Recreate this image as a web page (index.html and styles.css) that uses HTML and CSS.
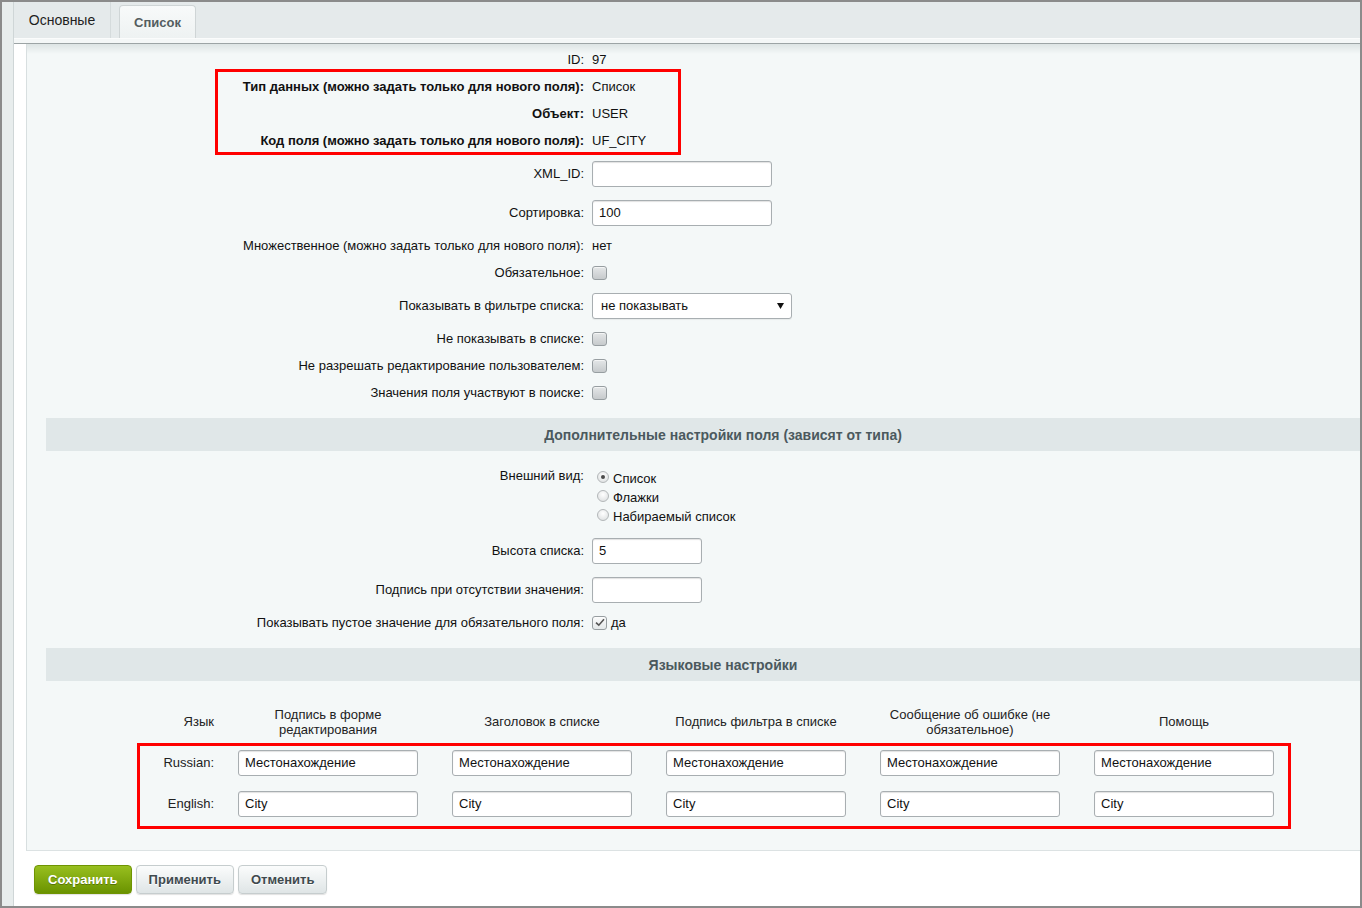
FILE: index.html
```html
<!DOCTYPE html>
<html lang="ru">
<head>
<meta charset="utf-8">
<title>Пользовательское поле</title>
<link rel="stylesheet" href="styles.css">
</head>
<body>
<div class="frame">
  <div class="page">
    <div class="tabs">
      <div class="tab tab-main">Основные</div>
      <div class="tab tab-list">Список</div>
    </div>
    <div class="tabs-under"></div>

    <div class="panel">
      <div class="form">
        <div class="row r27"><div class="lbl">ID:</div><div class="val">97</div></div>
        <div class="row r27"><div class="lbl b">Тип данных (можно задать только для нового поля):</div><div class="val">Список</div></div>
        <div class="row r27"><div class="lbl b">Объект:</div><div class="val">USER</div></div>
        <div class="row r27"><div class="lbl b">Код поля (можно задать только для нового поля):</div><div class="val">UF_CITY</div></div>
        <div class="row r39"><div class="lbl">XML_ID:</div><div class="val"><input class="inp w180" type="text" value=""></div></div>
        <div class="row r39"><div class="lbl">Сортировка:</div><div class="val"><input class="inp w180" type="text" value="100"></div></div>
        <div class="row r27"><div class="lbl">Множественное (можно задать только для нового поля):</div><div class="val">нет</div></div>
        <div class="row r27"><div class="lbl">Обязательное:</div><div class="val"><span class="cb"></span></div></div>
        <div class="row r39"><div class="lbl">Показывать в фильтре списка:</div><div class="val">
          <div class="select"><span>не показывать</span><svg class="arrow" width="7" height="6" viewBox="0 0 7 6"><path d="M0 0H7L3.5 6Z" fill="#111"/></svg></div>
        </div></div>
        <div class="row r27"><div class="lbl">Не показывать в списке:</div><div class="val"><span class="cb"></span></div></div>
        <div class="row r27"><div class="lbl">Не разрешать редактирование пользователем:</div><div class="val"><span class="cb"></span></div></div>
        <div class="row r27"><div class="lbl">Значения поля участвуют в поиске:</div><div class="val"><span class="cb"></span></div></div>
      </div>

      <div class="band">Дополнительные настройки поля (зависят от типа)</div>

      <div class="form">
        <div class="row rradio">
          <div class="lbl top">Внешний вид:</div>
          <div class="val radios">
            <div class="ritem"><span class="rd on"></span>Список</div>
            <div class="ritem"><span class="rd"></span>Флажки</div>
            <div class="ritem"><span class="rd"></span>Набираемый список</div>
          </div>
        </div>
        <div class="row r39"><div class="lbl">Высота списка:</div><div class="val"><input class="inp w110" type="text" value="5"></div></div>
        <div class="row r39"><div class="lbl">Подпись при отсутствии значения:</div><div class="val"><input class="inp w110" type="text" value=""></div></div>
        <div class="row r27"><div class="lbl">Показывать пустое значение для обязательного поля:</div><div class="val"><span class="cb on"><svg width="10" height="9" viewBox="0 0 10 9"><path d="M1 4.6L3.8 7.2L9 1.2" fill="none" stroke="#555" stroke-width="1.6"/></svg></span><span class="yes">да</span></div></div>
      </div>

      <div class="band">Языковые настройки</div>

      <div class="lang">
        <div class="lrow lhead">
          <div class="lc0">Язык</div>
          <div class="lc">Подпись в форме редактирования</div>
          <div class="lc">Заголовок в списке</div>
          <div class="lc">Подпись фильтра в списке</div>
          <div class="lc">Сообщение об ошибке (не обязательное)</div>
          <div class="lc">Помощь</div>
        </div>
        <div class="lrow">
          <div class="lc0">Russian:</div>
          <div class="lc"><input class="inp w180" type="text" value="Местонахождение"></div>
          <div class="lc"><input class="inp w180" type="text" value="Местонахождение"></div>
          <div class="lc"><input class="inp w180" type="text" value="Местонахождение"></div>
          <div class="lc"><input class="inp w180" type="text" value="Местонахождение"></div>
          <div class="lc"><input class="inp w180" type="text" value="Местонахождение"></div>
        </div>
        <div class="lrow">
          <div class="lc0">English:</div>
          <div class="lc"><input class="inp w180" type="text" value="City"></div>
          <div class="lc"><input class="inp w180" type="text" value="City"></div>
          <div class="lc"><input class="inp w180" type="text" value="City"></div>
          <div class="lc"><input class="inp w180" type="text" value="City"></div>
          <div class="lc"><input class="inp w180" type="text" value="City"></div>
        </div>
      </div>

      <div class="mark mark-top"></div>
      <div class="mark mark-lang"></div>
    </div>

    <div class="buttons">
      <button class="btn btn-save" type="button">Сохранить</button>
      <button class="btn" type="button">Применить</button>
      <button class="btn" type="button">Отменить</button>
    </div>
  </div>
</div>
</body>
</html>
```

FILE: styles.css
```css
* { box-sizing: border-box; }

html, body {
  margin: 0;
  padding: 0;
}

body {
  font-family: "Liberation Sans", Arial, sans-serif;
  font-size: 13px;
  color: #111;
  background: #fff;
}

.frame {
  width: 1362px;
  height: 908px;
  border: 2px solid #8b8b8b;
  background: #e8eded;
  padding-left: 11px;
  overflow: hidden;
}

.page {
  height: 100%;
  border-left: 1px solid #cfd6d7;
  background: #fff;
  display: flex;
  flex-direction: column;
}

/* Tabs */
.tabs {
  height: 36px;
  background: #e5eaeb;
  display: flex;
  align-items: flex-end;
  flex: none;
}

.tab {
  display: flex;
  align-items: center;
  justify-content: center;
}

.tab-main {
  width: 97px;
  height: 36px;
  font-size: 14px;
  color: #1e1e1e;
  border-right: 1px solid #d5dbdc;
}

.tab-list {
  margin-left: 8px;
  width: 77px;
  height: 33px;
  font-weight: bold;
  color: #545d60;
  background: linear-gradient(#f8fafa, #eef2f2);
  border: 1px solid #cfd5d6;
  border-bottom: none;
  border-radius: 4px 4px 0 0;
}

.tabs-under {
  height: 6px;
  flex: none;
  background: #f4f7f7;
  border-top: 1px solid #fbfcfc;
  border-bottom: 1px solid #9ca4a5;
}

/* Panel */
.panel {
  position: relative;
  flex: none;
  margin-left: 12px;
  border-left: 1px solid #d8dfe0;
  border-bottom: 1px solid #dce2e3;
  background: linear-gradient(#dde4e4, #f4f8f8 10px);
  padding: 2px 0 26px 19px;
}

.form {
  display: flex;
  flex-direction: column;
}

.row {
  display: grid;
  grid-template-columns: 538px 1fr;
  column-gap: 8px;
  align-items: center;
}

.r27 { height: 27px; }
.r39 { height: 39px; }

.rradio {
  align-items: start;
  padding: 18px 0 5px;
}

.lbl {
  text-align: right;
  white-space: nowrap;
  color: #111;
}

.lbl.b { font-weight: bold; }

.lbl.top {
  line-height: 15px;
  margin-top: -1px;
}

.val {
  display: flex;
  align-items: center;
  color: #111;
}

/* Inputs */
.inp {
  display: block;
  height: 26px;
  border: 1px solid #a8aeb1;
  border-radius: 3px;
  background: #fff;
  box-shadow: inset 0 1px 1px rgba(0, 0, 0, 0.12);
  padding: 0 6px;
  font-family: "Liberation Sans", Arial, sans-serif;
  font-size: 13px;
  color: #111;
  outline: none;
}

.w180 { width: 180px; }
.w110 { width: 110px; }

.select {
  width: 200px;
  height: 26px;
  border: 1px solid #a8aeb1;
  border-radius: 3px;
  background: #fff;
  box-shadow: 0 1px 1px rgba(0, 0, 0, 0.06);
  display: flex;
  align-items: center;
  justify-content: space-between;
  padding: 0 7px 0 8px;
}

.arrow { display: block; }

/* Checkbox */
.cb {
  width: 15px;
  height: 14px;
  border: 1px solid #979ea1;
  border-radius: 3px;
  background: linear-gradient(#e4e7e8, #c6cacc);
  display: flex;
  align-items: center;
  justify-content: center;
  box-shadow: inset 0 1px 0 rgba(255, 255, 255, 0.6);
}

.cb.on {
  background: linear-gradient(#fbfcfc, #e4e8e9);
}

.yes {
  margin-left: 4px;
}

/* Radios */
.radios {
  flex-direction: column;
  align-items: flex-start;
  margin-left: 5px;
}

.ritem {
  height: 19px;
  display: flex;
  align-items: center;
  color: #111;
}

.rd {
  width: 12px;
  height: 12px;
  border-radius: 50%;
  border: 1px solid #b3b7b9;
  background: radial-gradient(circle at 50% 35%, #ffffff, #d9dcdd);
  margin-right: 4px;
  margin-top: -3px;
  display: flex;
  align-items: center;
  justify-content: center;
}

.rd.on::before {
  content: "";
  width: 4px;
  height: 4px;
  border-radius: 50%;
  background: #4a4a4a;
}

/* Section bands */
.band {
  margin-top: 12px;
  height: 33px;
  background: #e0e7e8;
  display: flex;
  align-items: center;
  justify-content: center;
  padding-left: 40px;
  font-size: 14px;
  font-weight: bold;
  color: #4b595e;
}

/* Language table */
.lang {
  margin-top: 20px;
}

.lrow {
  display: grid;
  grid-template-columns: 168px repeat(5, 214px);
  height: 41px;
  align-items: center;
}

.lc0 {
  text-align: right;
  color: #222;
}

.lc {
  padding: 0 10px 0 24px;
  text-align: center;
  color: #222;
  line-height: 15px;
}

/* Annotation frames */
.mark {
  position: absolute;
  border: 3px solid #ff0000;
  pointer-events: none;
}

.mark-top {
  left: 188px;
  top: 25px;
  width: 466px;
  height: 86px;
}

.mark-lang {
  left: 110px;
  top: 699px;
  width: 1154px;
  height: 86px;
}

/* Buttons */
.buttons {
  flex: 1;
  display: flex;
  align-items: flex-start;
  gap: 4px;
  padding: 14px 0 0 20px;
  background: #fff;
}

.btn {
  height: 29px;
  padding: 0 12px;
  border: 1px solid #c6cdce;
  border-radius: 4px;
  background: linear-gradient(#fbfcfc, #dfe5e6);
  box-shadow: 0 1px 1px rgba(0, 0, 0, 0.12);
  font-family: "Liberation Sans", Arial, sans-serif;
  font-size: 13px;
  font-weight: bold;
  color: #3f4a4e;
  text-shadow: 0 1px 0 #fff;
}

.btn-save {
  padding: 0 13px;
  border-color: #6f9402;
  background: linear-gradient(#98bf1f, #6a9300);
  color: #fff;
  text-shadow: 0 1px 0 rgba(0, 0, 0, 0.3);
}
```
